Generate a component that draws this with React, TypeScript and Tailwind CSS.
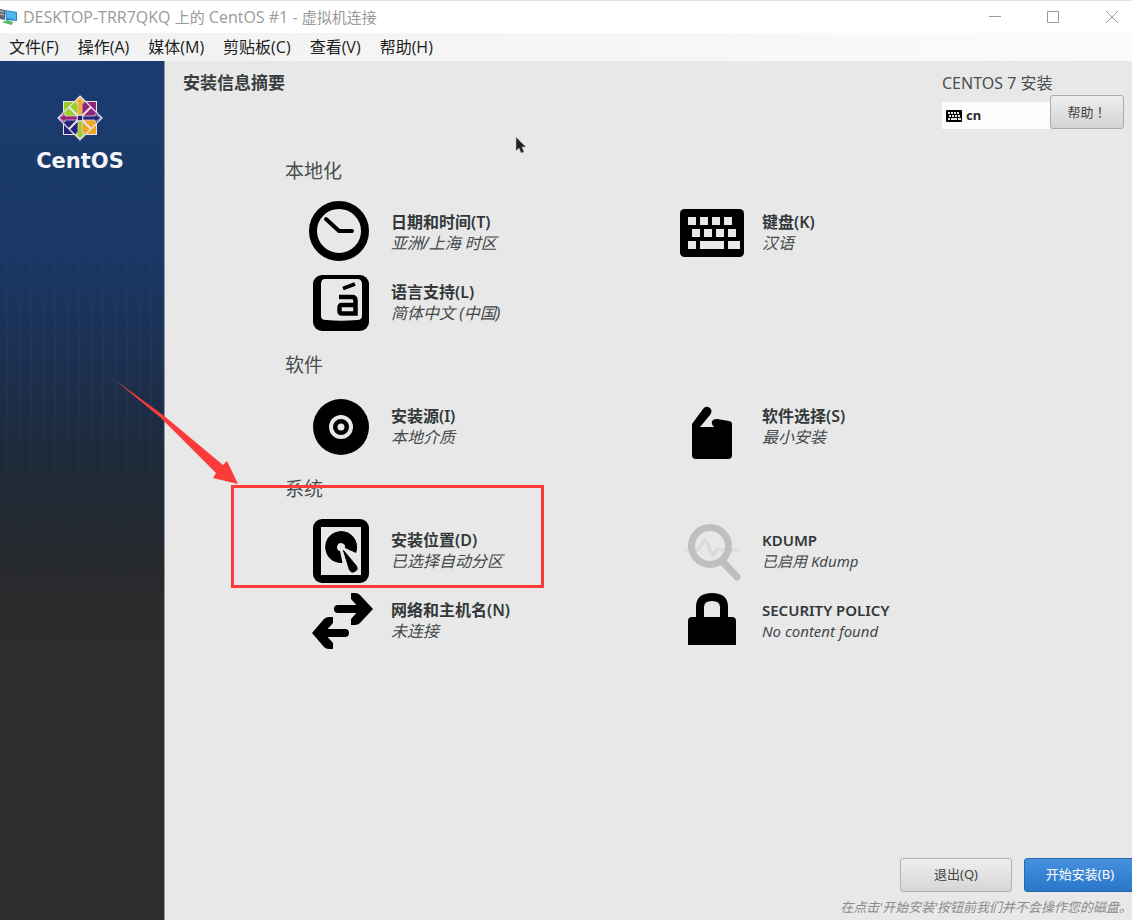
import type { ReactNode } from 'react';

const menus = ['文件(F)', '操作(A)', '媒体(M)', '剪贴板(C)', '查看(V)', '帮助(H)'];

function ClockIcon() {
  return (
    <svg viewBox="0 0 64 64" className="size-16" aria-hidden="true">
      <circle cx="30" cy="30" r="26" fill="none" stroke="#000" strokeWidth="8" />
      <path d="M17 18L30 30H43" fill="none" stroke="#000" strokeWidth="4" strokeLinecap="round" strokeLinejoin="round" />
    </svg>
  );
}

function LanguageIcon() {
  return (
    <svg viewBox="0 0 64 64" className="size-16" aria-hidden="true">
      <rect x="4" y="4" width="56" height="56" rx="9" />
      <path d="M16 8H48Q53 8 53 13V45Q53 49 48 49Q32 50.500 17 49Q12 49 12 45V13Q12 8 16 8Z" fill="#e8e8e8" />
      <path d="M34 17.500L46 13" stroke="#000" strokeWidth="4" />
      <path d="M30 26H43Q46.500 26 46.500 29.500V42.500H33Q30.500 42.500 30.500 40V37Q30.500 34 33 34H46" fill="none" stroke="#000" strokeWidth="4.500" />
    </svg>
  );
}

function DiscIcon() {
  return (
    <svg viewBox="0 0 64 64" className="size-16" aria-hidden="true">
      <circle cx="32" cy="32" r="28" />
      <circle cx="32" cy="32" r="10" fill="#000" stroke="#e8e8e8" strokeWidth="4" />
      <circle cx="32" cy="32" r="3.500" fill="#e8e8e8" />
    </svg>
  );
}

function DriveIcon() {
  return (
    <svg viewBox="0 0 64 64" className="size-16" aria-hidden="true">
      <rect x="4" width="56" height="64" rx="9" />
      <path d="M12 8H52V56H12Z" fill="#e8e8e8" />
      <path d="M33.500 44A16 16 0 1 1 47 34L36 29A4 4 0 1 0 31 32Z" />
      <path d="M34.500 31.500L47.500 47A4 4 0 0 1 40.500 51Z" stroke="#000" strokeWidth="1" />
    </svg>
  );
}

function NetworkIcon() {
  return (
    <svg viewBox="0 0 64 64" className="size-16" aria-hidden="true">
      <g fill="none" stroke="#000" strokeWidth="8">
        <path d="M29 20H56" strokeLinecap="round" />
        <path d="M36 44H10" strokeLinecap="round" />
      </g>
      <path d="M42 4H46Q49 4 51 6L64 20L51 34Q49 36 46 36H42V30L51 20L42 10Z" />
      <path d="M24 28H20Q17 28 15 30L3 44L15 58Q17 60 20 60H24V54L15 44L24 34Z" />
    </svg>
  );
}

function KeyboardIcon({ className }: { className: string }) {
  return (
    <svg viewBox="0 0 64 48" className={className} aria-hidden="true">
      <rect width="64" height="48" rx="4.500" />
      <path
        fill="#e8e8e8"
        d="M8 8h8v8h-8zM20 8h8v8h-8zM32 8h8v8h-8zM44 8h8v8h-8zM12 20h8v8h-8zM24 20h8v8h-8zM36 20h8v8h-8zM48 20h8v8h-8zM8 32h8v8h-8zM20 32h24v8h-24zM48 32h12v8h-12z"
      />
    </svg>
  );
}

function PackageIcon() {
  return (
    <svg viewBox="0 0 64 64" className="size-16" aria-hidden="true">
      <path d="M12 29L23 14Q26 10 30 13Q33 16 30 20L20 32H34Q30 28 33 25Q35 24 37 24L49 26Q52 26.500 52 29V60Q52 64 48 64H16Q12 64 12 60Z" />
    </svg>
  );
}

function KdumpIcon() {
  return (
    <svg viewBox="0 0 64 64" className="size-16" fill="none" strokeLinecap="round" aria-hidden="true">
      <path d="M6 31H18L25 20L33 37L38 29L41 31H58" stroke="#dadada" strokeWidth="3" strokeLinejoin="round" />
      <circle cx="30" cy="27" r="18.500" stroke="#bfbfbf" strokeWidth="7" />
      <path d="M43 43L57 58" stroke="#bfbfbf" strokeWidth="7" />
    </svg>
  );
}

function LockIcon() {
  return (
    <svg viewBox="0 0 64 64" className="size-16" aria-hidden="true">
      <path d="M20 34V18Q20 8 32 8T44 18V34" fill="none" stroke="#000" strokeWidth="8" />
      <path d="M12 28H52Q56 28 56 32V56H8V32Q8 28 12 28Z" />
    </svg>
  );
}

function Spoke({ icon, title, status, latin = false }: { icon: ReactNode; title: string; status: string; latin?: boolean }) {
  return (
    <button type="button" className="flex h-[70px] min-w-0 items-center gap-[18px] text-left">
      <span className="flex w-16 shrink-0 justify-center">{icon}</span>
      <span className={`flex min-w-0 flex-col whitespace-nowrap leading-[21px] text-[#33383a] ${latin ? 'text-[15px]' : 'text-[16px]'}`}>
        <span className="font-semibold">{title}</span>
        <span className="italic text-[#44494b]">{status}</span>
      </span>
    </button>
  );
}

function Section({ title, children, overlay }: { title: string; children: ReactNode; overlay?: ReactNode }) {
  return (
    <section className="relative">
      <h2 className="text-[19px] leading-7 text-[#4a4e50]">{title}</h2>
      <div className="mt-[13px] grid grid-cols-2 pl-6">{children}</div>
      {overlay}
    </section>
  );
}

function CentosMark() {
  return (
    <svg viewBox="0 0 46 46" className="size-[46px]" aria-hidden="true">
      <path d="M6 6L40 6V40H6Z" fill="#e9e4ee" />
      <path d="M7 7H22.500V22.500H7Z" fill="#9ccd2a" />
      <path d="M23.500 7H39V22.500H23.500Z" fill="#932279" />
      <path d="M7 23.500H22.500V39H7Z" fill="#262577" />
      <path d="M23.500 23.500H39V39H23.500Z" fill="#efa724" />
      <path d="M23 1L29 7H17Z" fill="#efa724" />
      <path d="M45 23L39 29V17Z" fill="#262577" />
      <path d="M23 45L17 39H29Z" fill="#9ccd2a" />
      <path d="M1 23L7 17V29Z" fill="#932279" />
      <g fill="none" stroke="#e9e4ee" strokeWidth="1.200">
        <path d="M23 1L45 23L23 45L1 23Z" />
        <path d="M12 12L21 21M34 12L25 21M12 34L21 25M34 34L25 25" strokeWidth="2" />
        <path d="M17 7L9 15M29 7L37 15M17 39L9 31M29 39L37 31" strokeWidth=".5" />
      </g>
      <g stroke="#e9e4ee" strokeWidth=".7">
        <path d="M23 2L27 8H25V20H21V8H19Z" fill="#efa724" />
        <path d="M44 23L38 27V25H26V21H38V19Z" fill="#262577" />
        <path d="M23 44L19 38H21V26H25V38H27Z" fill="#9ccd2a" />
        <path d="M2 23L8 19V21H20V25H8V27Z" fill="#932279" />
        <rect x="20.500" y="20.500" width="5" height="5" fill="#262577" />
      </g>
    </svg>
  );
}

export default function App() {
  return (
    <div className="flex min-h-screen flex-col overflow-hidden bg-[#e8e8e8] font-['Noto_Sans','Noto_Sans_CJK_SC',sans-serif]">
      <header className="flex h-[33px] items-center border-t border-[#e4e4e4] bg-white">
        <svg viewBox="0 0 18 18" className="size-[18px] shrink-0" aria-hidden="true">
          <path d="M0 1L5 2V12L0 11Z" fill="#5c6670" />
          <path d="M0 3L4 4M0 6L4 7" stroke="#bec8d0" />
          <path d="M5 2L17 4V13L6 12Z" fill="#2a83c4" />
          <path d="M6 3L16 5V12L7 10Z" fill="#4db5ef" />
          <path d="M2 14L7 12L13 14L12 17L8 16Z" fill="#56b765" />
        </svg>
        <h1 className="ml-[5px] flex-1 whitespace-nowrap text-[16px] leading-6 text-[#9a9a9a] font-['Open_Sans','Noto_Sans_CJK_SC',sans-serif]">
          DESKTOP-TRR7QKQ <span className="text-[15px]">上的</span> CentOS #1 - <span className="text-[15px]">虚拟机连接</span>
        </h1>
        <div className="flex text-[#999]">
          <button type="button" aria-label="最小化" className="flex h-8 w-[58px] items-center justify-center">
            <svg viewBox="0 0 14 14" className="size-3.5" fill="none" stroke="currentColor"><path d="M1 6.500H13" /></svg>
          </button>
          <button type="button" aria-label="最大化" className="flex h-8 w-[58px] items-center justify-center">
            <svg viewBox="0 0 14 14" className="size-3.5" fill="none" stroke="currentColor"><path d="M1.500 1.500H12.500V12.500H1.500Z" /></svg>
          </button>
          <button type="button" aria-label="关闭" className="flex h-8 w-[50px] items-center justify-center pl-[9px]">
            <svg viewBox="0 0 14 14" className="size-3.5" fill="none" stroke="currentColor"><path d="M1 1L13 13M13 1L1 13" /></svg>
          </button>
        </div>
      </header>

      <nav className="flex h-7 items-center gap-[19px] bg-gradient-to-r from-[#f1f1f1] to-[#fbfbfb] pl-[9px] text-[16px] text-[#1c1c1c] font-['Open_Sans','Noto_Sans_CJK_SC',sans-serif]">
        {menus.map((menu) => (
          <button key={menu} type="button" className="whitespace-nowrap">{menu}</button>
        ))}
      </nav>

      <div className="flex flex-1">
        <aside className="relative flex w-[165px] shrink-0 flex-col items-center border-r border-[#8f959c] bg-[linear-gradient(to_bottom,#1b3c70_0%,#193866_22%,#1c3052_34%,#1f2936_48%,#282a2d_60%,#2d2d2d_70%)] pr-1 pt-[34px]">
          <div className="absolute inset-x-0 top-0 h-[520px] bg-[repeating-linear-gradient(90deg,transparent_0px,transparent_5px,rgba(60,110,160,0.12)_7px,transparent_9px,transparent_12px)] [mask-image:linear-gradient(to_bottom,transparent_20%,black_55%,transparent)]" />
          <CentosMark />
          <span className="mt-1 text-[21px] font-bold leading-8 text-[#f4f6fa] font-['DejaVu_Sans',sans-serif]">CentOS</span>
        </aside>

        <main className="relative flex min-w-0 flex-1 flex-col">
          <div className="flex h-24 items-start justify-between pl-[18px] pr-2 pt-2.5">
            <h2 className="text-[17px] font-bold leading-6 text-[#383d3f]">安装信息摘要</h2>
            <div className="w-[182px]">
              <p className="text-[16px] leading-6 text-[#4a4e50]">CENTOS 7 安装</p>
              <div className="flex items-end">
                <button type="button" className="flex h-[27px] flex-1 items-center gap-1 bg-[#fcfcfc] pl-1 text-[13px] font-bold text-[#2b2b2b]">
                  <KeyboardIcon className="h-3 w-4" />
                  cn
                </button>
                <button type="button" className="h-[34px] w-[74px] rounded-[3px] border border-[#ababab] bg-gradient-to-b from-[#eeeeee] to-[#d4d4d4] text-[13px] text-[#444] font-['Noto_Sans_CJK_TC',sans-serif]">
                  帮助！
                </button>
              </div>
            </div>
          </div>

          <div className="flex flex-col gap-[13px] pl-[120px] pr-[81px]">
            <Section title="本地化">
              <Spoke icon={<ClockIcon />} title="日期和时间(T)" status="亚洲/上海 时区" />
              <Spoke icon={<KeyboardIcon className="h-12 w-16" />} title="键盘(K)" status="汉语" />
              <Spoke icon={<LanguageIcon />} title="语言支持(L)" status="简体中文 (中国)" />
            </Section>
            <Section title="软件">
              <Spoke icon={<DiscIcon />} title="安装源(I)" status="本地介质" />
              <Spoke icon={<PackageIcon />} title="软件选择(S)" status="最小安装" />
            </Section>
            <Section
              title="系统"
              overlay={
                <>
                  <div className="pointer-events-none absolute -left-[54px] top-2.5 h-[103px] w-[313px] border-3 border-[#fb3b38]" />
                  <svg viewBox="0 0 124 105" className="pointer-events-none absolute -left-[170px] -top-[95px] h-[105px] w-[124px]" aria-hidden="true">
                    <path d="M0 0L48 35L108 85L112 81L123 104L98 98L101 93L46 38Z" fill="#fb3b38" />
                  </svg>
                </>
              }
            >
              <Spoke icon={<DriveIcon />} title="安装位置(D)" status="已选择自动分区" />
              <Spoke icon={<KdumpIcon />} title="KDUMP" status="已启用 Kdump" latin />
              <Spoke icon={<NetworkIcon />} title="网络和主机名(N)" status="未连接" />
              <Spoke icon={<LockIcon />} title="SECURITY POLICY" status="No content found" latin />
            </Section>
          </div>

          <footer className="mt-auto flex flex-col items-end">
            <div className="flex gap-3">
              <button type="button" className="h-[34px] w-28 rounded-[3px] border border-[#b0b0b0] bg-gradient-to-b from-[#eeeeee] to-[#d6d6d6] text-[13px] text-[#444]">
                退出(Q)
              </button>
              <button type="button" className="-mr-1 h-[34px] w-28 rounded-[3px] border border-[#2767ac] bg-gradient-to-b from-[#4591de] to-[#2a76c8] text-[13px] text-white">
                开始安装(B)
              </button>
            </div>
            <p className="pb-0.5 pt-1 text-[13px] italic leading-[22px] text-[#8b8b8b]">在点击'开始安装'按钮前我们并不会操作您的磁盘。</p>
          </footer>

          <svg viewBox="0 0 12 18" className="pointer-events-none absolute left-[350px] top-[76px] h-[18px] w-3" aria-hidden="true">
            <path d="M1 0V14L4 11L6 16L9 15L7 10H11Z" fill="#222" stroke="#bbb" strokeWidth=".6" />
          </svg>
        </main>
      </div>
    </div>
  );
}
